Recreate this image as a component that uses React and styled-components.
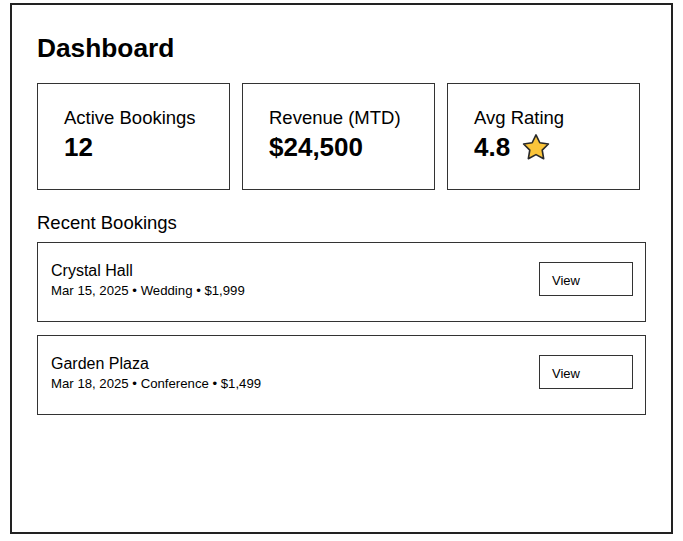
import React from 'react';
import styled, { createGlobalStyle } from 'styled-components';

const GlobalStyle = createGlobalStyle`
  body {
    margin: 0;
    background: #fff;
    font-family: "Liberation Sans", Arial, sans-serif;
    color: #000;
  }
`;

const Frame = styled.div`
  box-sizing: border-box;
  width: 663px;
  height: 531px;
  margin: 3px 0 0 10px;
  padding: 28px 25px 0;
  border: 2px solid #222;
`;

const Title = styled.h1`
  margin: 0 0 20px;
  font-size: 26.3px;
  line-height: 30px;
  font-weight: 700;
`;

const StatGrid = styled.div`
  display: grid;
  grid-template-columns: repeat(3, 193px);
  gap: 12px;
`;

const StatCard = styled.div`
  box-sizing: border-box;
  height: 107px;
  padding: 23px 26px 0;
  border: 1px solid #333;
`;

const StatLabel = styled.div`
  font-size: 18.5px;
  line-height: 21px;
`;

const StatValue = styled.div`
  display: flex;
  align-items: center;
  gap: 11px;
  margin-top: 4px;
  font-size: 26px;
  line-height: 30px;
  font-weight: 700;
`;

const SectionTitle = styled.h2`
  margin: 22px 0 9px;
  font-size: 18.5px;
  line-height: 21px;
  font-weight: 400;
`;

const BookingList = styled.div`
  display: flex;
  flex-direction: column;
  gap: 13px;
`;

const BookingRow = styled.div`
  box-sizing: border-box;
  height: 80px;
  display: flex;
  align-items: flex-start;
  justify-content: space-between;
  padding: 19px 12px 0 13px;
  border: 1px solid #333;
`;

const Venue = styled.div`
  font-size: 16px;
  line-height: 18px;
`;

const Meta = styled.div`
  margin-top: 3px;
  font-size: 13.2px;
  line-height: 15px;
`;

const ViewButton = styled.button`
  box-sizing: border-box;
  width: 94px;
  height: 34px;
  padding: 3px 12px 0;
  border: 1px solid #333;
  background: #fff;
  font-family: inherit;
  font-size: 13px;
  line-height: 29px;
  text-align: left;
  color: #000;
  cursor: pointer;
`;

const Star = () => (
  <svg width="30" height="29" viewBox="0 0 29 28">
    <path
      d="M14.5 1.8l3.7 7.6 8.3 1.2-6 5.9 1.4 8.3-7.4-3.9-7.4 3.9 1.4-8.3-6-5.9 8.3-1.2z"
      fill="#FBC53A"
      stroke="#2a2a2a"
      strokeWidth="1.6"
      strokeLinejoin="round"
    />
  </svg>
);

const stats = [
  { label: 'Active Bookings', value: '12' },
  { label: 'Revenue (MTD)', value: '$24,500' },
  { label: 'Avg Rating', value: '4.8', star: true },
];

const bookings = [
  { venue: 'Crystal Hall', meta: 'Mar 15, 2025 • Wedding • $1,999' },
  { venue: 'Garden Plaza', meta: 'Mar 18, 2025 • Conference • $1,499' },
];

const App = () => (
  <>
    <GlobalStyle />
    <Frame>
      <Title>Dashboard</Title>
      <StatGrid>
        {stats.map((s) => (
          <StatCard key={s.label}>
            <StatLabel>{s.label}</StatLabel>
            <StatValue>
              {s.value}
              {s.star && <Star />}
            </StatValue>
          </StatCard>
        ))}
      </StatGrid>
      <SectionTitle>Recent Bookings</SectionTitle>
      <BookingList>
        {bookings.map((b) => (
          <BookingRow key={b.venue}>
            <div>
              <Venue>{b.venue}</Venue>
              <Meta>{b.meta}</Meta>
            </div>
            <ViewButton>View</ViewButton>
          </BookingRow>
        ))}
      </BookingList>
    </Frame>
  </>
);

export default App;
